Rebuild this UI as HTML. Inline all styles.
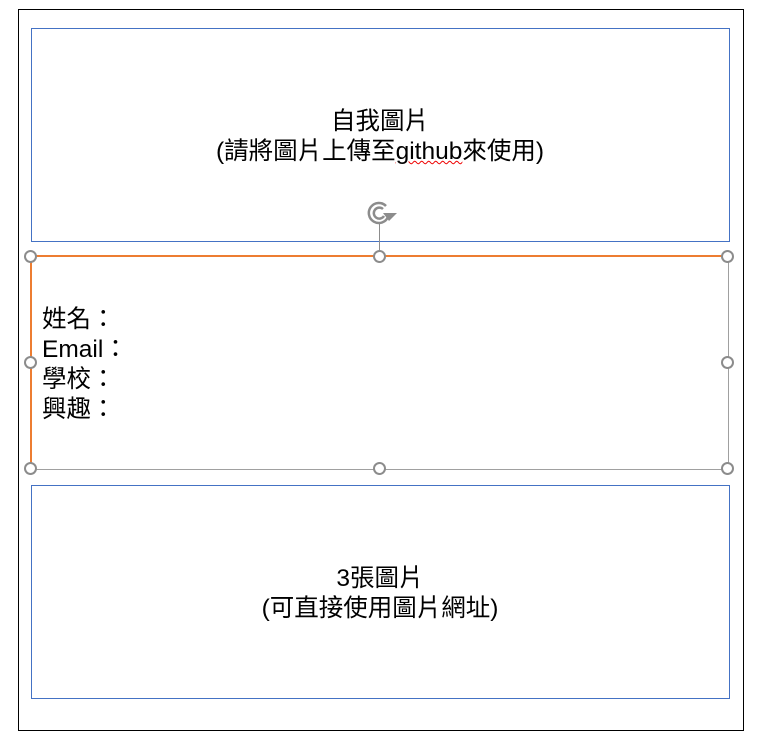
<!DOCTYPE html>
<html><head><meta charset="utf-8"><style>
body{margin:0;width:761px;height:743px;background:#fff;position:relative;overflow:hidden;font-family:"Liberation Sans","Noto Sans CJK TC",sans-serif;color:#000}
.a{position:absolute;box-sizing:border-box}
.t{position:absolute;left:31px;width:698px;text-align:center;font-size:24.5px;line-height:30px}
.h{position:absolute;width:13px;height:13px;border:2px solid #8c8c8c;border-radius:50%;background:#fff;box-sizing:border-box}
</style></head><body>
<div class="a" style="left:18px;top:9px;width:726px;height:722px;border:1px solid #000"></div>
<div class="a" style="left:31px;top:28px;width:699px;height:214px;border:1px solid #4472c4"></div>
<div class="t" style="top:107px">自我圖片<br>(請將圖片上傳至<span style="text-decoration:underline wavy #e00;text-decoration-thickness:1px">github</span>來使用)</div>
<div class="a" style="left:31px;top:485px;width:699px;height:214px;border:1px solid #4472c4"></div>
<div class="t" style="top:564px">3張圖片<br>(可直接使用圖片網址)</div>
<div class="a" style="left:30px;top:255px;width:699px;height:215px;border:1px solid #a0a0a0;border-top:2px solid #ed7d31;border-left:2px solid #ed7d31"></div>
<div class="a" style="left:379px;top:224px;width:1px;height:32px;background:#8c8c8c"></div>
<svg class="a" style="left:364px;top:199px" width="34" height="28" viewBox="0 0 34 28"><g fill="none" stroke="#8c8c8c" stroke-width="2.5"><path d="M22 7 A10 10 0 1 0 24 18"/><path d="M19 10 A5.5 5.5 0 1 0 20 17"/></g><path d="M19 14 L33 14 L25 22 Z" fill="#8c8c8c"/></svg>
<div class="a" style="left:42px;top:305px;font-size:24.5px;line-height:30px">姓名：<br>Email：<br>學校：<br>興趣：</div>
<div class="h" style="left:24px;top:250px"></div>
<div class="h" style="left:373px;top:250px"></div>
<div class="h" style="left:721px;top:250px"></div>
<div class="h" style="left:24px;top:356px"></div>
<div class="h" style="left:721px;top:356px"></div>
<div class="h" style="left:24px;top:462px"></div>
<div class="h" style="left:373px;top:462px"></div>
<div class="h" style="left:721px;top:462px"></div>
</body></html>
